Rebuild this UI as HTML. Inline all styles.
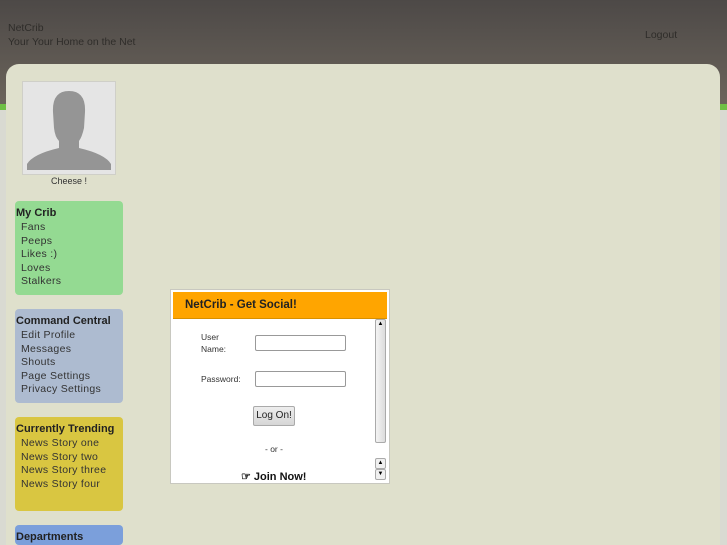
<!DOCTYPE html>
<html><head><meta charset="utf-8"><style>
*{margin:0;padding:0;box-sizing:border-box}
html,body{width:727px;height:545px;overflow:hidden}
body{position:relative;font-family:"Liberation Sans",sans-serif;background:#d9dad2}
.top{position:absolute;left:0;top:0;width:727px;height:104px;background:linear-gradient(#4d4947,#6b645b)}
.green{position:absolute;left:0;top:104px;width:727px;height:6px;background:#6fc045}
.hd{position:absolute;left:8px;font-size:10.5px;color:#2f2d2a}
.panel{position:absolute;left:6px;top:64px;width:714px;height:481px;background:#dfe0cc;border-radius:13px 13px 0 0}
.av{position:absolute;left:22px;top:81px;width:94px;height:94px;background:#e5e5e5;border:1px solid #cfcfc8}
.cap{position:absolute;left:22px;width:94px;top:176px;text-align:center;font-size:9px;color:#333}
.box{position:absolute;left:15px;width:108px;height:94px;border-radius:4px;font-size:10.5px;color:#333;padding-top:6px;letter-spacing:.3px}
.box b{display:block;font-size:11px;color:#222;margin-bottom:1px;margin-left:1px;letter-spacing:0;line-height:13px}
.box div{padding-left:6px;line-height:13.5px}
.pop{position:absolute;left:170px;top:289px;width:220px;height:195px;background:#fff;border:1px solid #c8c8c0}
.ph{position:absolute;left:2px;top:2px;width:214px;height:27px;background:#ffa500;font-weight:bold;font-size:11.5px;color:#222;padding:7px 0 0 12px;border-bottom:1px solid #d89000}
.lbl{position:absolute;font-size:8.5px;color:#333;line-height:12px}
.in{position:absolute;left:84px;width:91px;height:16px;border:1px solid #999;border-radius:2px;background:#fff}
.btn{position:absolute;left:82px;top:116px;width:42px;height:20px;background:linear-gradient(#eee,#d6d6d6);border:1px solid #aaa;border-radius:2px;font-size:10px;text-align:center;line-height:18px;color:#222}
.sb{position:absolute;left:204px;width:11px;background:#f0f0f0;border:1px solid #aaa;border-radius:2px;font-size:6px;text-align:center;line-height:9px}
</style></head><body>
<div class="top"></div><div class="green"></div>
<div class="hd" style="top:22px">NetCrib</div>
<div class="hd" style="top:36px">Your Your Home on the Net</div>
<div class="hd" style="left:645px;top:29px">Logout</div>
<div class="panel"></div>
<div class="av"><svg width="92" height="92" viewBox="0 0 92 92"><path d="M30 30 Q29 9 46 9 Q63 9 62 30 L61 46 Q59 55 56 59 L56 66 Q82 72 88 82 L88 88 L4 88 L4 82 Q10 72 36 66 L36 59 Q32 55 31 46 Z" fill="#959595"/></svg></div>
<div class="cap">Cheese !</div>
<div class="box" style="top:201px;background:#94da92"><b>My Crib</b><div>Fans</div><div>Peeps</div><div>Likes :)</div><div>Loves</div><div>Stalkers</div></div>
<div class="box" style="top:309px;background:#adbbd0"><b>Command Central</b><div>Edit Profile</div><div>Messages</div><div>Shouts</div><div>Page Settings</div><div>Privacy Settings</div></div>
<div class="box" style="top:417px;background:#d9c641"><b>Currently Trending</b><div>News Story one</div><div>News Story two</div><div>News Story three</div><div>News Story four</div></div>
<div class="box" style="top:525px;height:20px;background:#7b9fdb"><b>Departments</b></div>
<div class="pop">
<div class="ph">NetCrib - Get Social!</div>
<div class="lbl" style="left:30px;top:41px">User<br>Name:</div>
<div class="in" style="top:45px"></div>
<div class="lbl" style="left:30px;top:83px">Password:</div>
<div class="in" style="top:81px"></div>
<div class="btn">Log On!</div>
<div class="lbl" style="left:94px;top:153px">- or -</div>
<div style="position:absolute;left:70px;top:180px;font-size:11px;font-weight:bold;color:#111">☞ Join Now!</div>
<div class="sb" style="top:29px;height:124px;background:linear-gradient(90deg,#f4f4f4,#dcdcdc)">▲</div>
<div class="sb" style="top:168px;height:11px">▲</div>
<div class="sb" style="top:179px;height:11px">▼</div>
</div>
</body></html>
